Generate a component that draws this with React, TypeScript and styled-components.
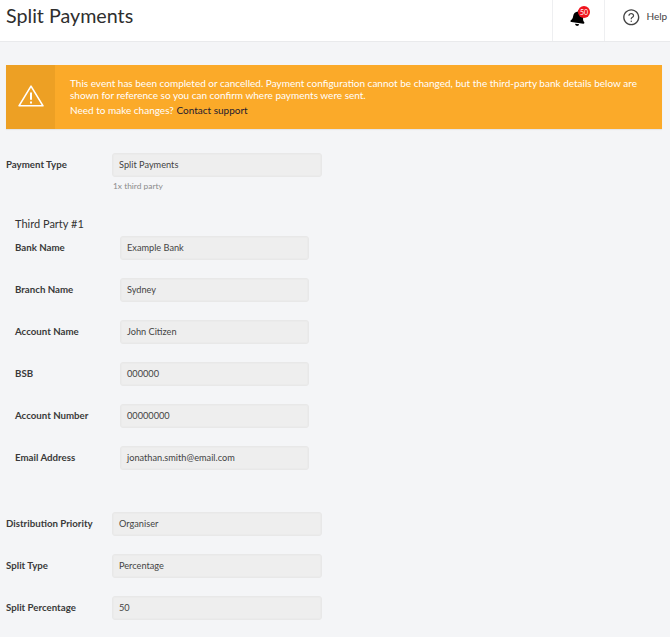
import React from 'react';
import styled, { createGlobalStyle } from 'styled-components';
import { FaBell } from 'react-icons/fa';
import { AiOutlineQuestionCircle } from 'react-icons/ai';

const GlobalStyle = createGlobalStyle`
  html, body {
    margin: 0;
    padding: 0;
    background: #f4f5f7;
    font-family: Lato, "Open Sans", sans-serif;
    color: #333;
  }
`;

const thirdParty = [
  { label: 'Bank Name', value: 'Example Bank' },
  { label: 'Branch Name', value: 'Sydney' },
  { label: 'Account Name', value: 'John Citizen' },
  { label: 'BSB', value: '000000' },
  { label: 'Account Number', value: '00000000' },
  { label: 'Email Address', value: 'jonathan.smith@email.com' },
];

const distribution = [
  { label: 'Distribution Priority', value: 'Organiser' },
  { label: 'Split Type', value: 'Percentage' },
  { label: 'Split Percentage', value: '50' },
];

const WarningIcon = () => (
  <svg width='26' height='22' viewBox='0 0 26 22' fill='none' stroke='#fff' strokeWidth='1.6' strokeLinejoin='round'>
    <path d='M13 1.2 L25 20.8 H1 Z' />
    <path d='M13 7.5 V14.8' strokeWidth='2' />
    <path d='M13 16.4 V18.6' strokeWidth='2' />
  </svg>
);

const App = () => {
  return (
    <Page>
      <GlobalStyle />
      <Header>
        <Title>Split Payments</Title>
        <BellCell>
          <BellWrap>
            <FaBell />
            <Badge>50</Badge>
          </BellWrap>
        </BellCell>
        <HelpCell>
          <AiOutlineQuestionCircle />
          <span>Help</span>
        </HelpCell>
      </Header>
      <Content>
        <Banner>
          <BannerIcon>
            <WarningIcon />
          </BannerIcon>
          <BannerText>
            <p>
              This event has been completed or cancelled. Payment configuration cannot be changed, but the third-party
              bank details below are shown for reference so you can confirm where payments were sent.
            </p>
            <p>
              Need to make changes? <a href='#'>Contact support</a>
            </p>
          </BannerText>
        </Banner>

        <Row>
          <Label>Payment Type</Label>
          <Field>Split Payments</Field>
        </Row>
        <Hint>1x third party</Hint>

        <ThirdParty>
          <SectionTitle>Third Party #1</SectionTitle>
          {thirdParty.map((item) => (
            <Row key={item.label}>
              <Label $nested>{item.label}</Label>
              <Field $nested>{item.value}</Field>
            </Row>
          ))}
        </ThirdParty>

        <Distribution>
          {distribution.map((item) => (
            <Row key={item.label}>
              <Label>{item.label}</Label>
              <Field>{item.value}</Field>
            </Row>
          ))}
        </Distribution>
      </Content>
    </Page>
  );
};
export default App;

const Page = styled.div`
  width: 670px;
  height: 637px;
  overflow: hidden;
`;

const Header = styled.header`
  display: flex;
  align-items: stretch;
  height: 41px;
  background: #fff;
  border-bottom: 1px solid #e9eaec;
`;

const Title = styled.h1`
  flex: 1;
  margin: 0;
  padding-left: 6px;
  font-size: 19.7px;
  font-weight: 400;
  line-height: 32px;
  color: #2e2e2e;
`;

const BellCell = styled.div`
  width: 52px;
  display: flex;
  align-items: flex-start;
  justify-content: center;
  padding-top: 10px;
  box-sizing: border-box;
  border-left: 1px solid #eeeff1;
`;

const BellWrap = styled.div`
  position: relative;
  width: 16px;
  height: 15px;
  margin-left: -1px;
  font-size: 16px;
  line-height: 15px;
  color: #000;

  svg {
    display: block;
    transform: rotate(8deg);
  }
`;

const Badge = styled.span`
  position: absolute;
  top: -4px;
  left: 8px;
  width: 12px;
  height: 12px;
  border-radius: 50%;
  background: #f0141e;
  color: #fff;
  font-size: 7px;
  line-height: 12px;
  text-align: center;
`;

const HelpCell = styled.div`
  width: 66px;
  display: flex;
  align-items: flex-start;
  gap: 6px;
  padding: 8px 0 0 17px;
  box-sizing: border-box;
  border-left: 1px solid #eeeff1;
  font-size: 10px;
  line-height: 16px;
  color: #444;

  svg {
    font-size: 18.5px;
    color: #444;
    flex: none;
  }
`;

const Content = styled.main`
  padding: 23px 8px 0 6px;
`;

const Banner = styled.section`
  display: flex;
  height: 64px;
  margin-bottom: 24px;
  background: #fbaa29;
  box-shadow: 0 1px 1px rgba(0, 0, 0, 0.06);
`;

const BannerIcon = styled.div`
  width: 49px;
  flex: none;
  display: flex;
  align-items: center;
  justify-content: center;
  padding-bottom: 3px;
  box-sizing: border-box;
  background: #eda024;
`;

const BannerText = styled.div`
  padding: 12px 14px 0 15px;
  font-size: 10px;
  line-height: 12px;
  color: #fff;

  p {
    margin: 0 0 3px;
  }

  a {
    color: #241b2f;
    text-decoration: none;
  }
`;

const Row = styled.div`
  display: flex;
  align-items: center;
  height: 24px;
  margin-bottom: 18px;
`;

const Label = styled.label<{ $nested?: boolean }>`
  width: ${(p) => (p.$nested ? '105px' : '106px')};
  flex: none;
  margin-bottom: 2px;
  font-size: 9.7px;
  font-weight: 700;
  color: #3a3a3a;
`;

const Field = styled.div<{ $nested?: boolean }>`
  width: ${(p) => (p.$nested ? '189px' : '210px')};
  height: 24px;
  box-sizing: border-box;
  padding-left: 6px;
  border: 1px solid #e8e8e8;
  border-radius: 3px;
  background: #eeeeee;
  box-shadow: inset 0 0 0 1px #ebebeb;
  font-size: 9.2px;
  line-height: 22px;
  color: #444;
`;

const Hint = styled.div`
  margin: -16px 0 0 107px;
  font-size: 8.4px;
  line-height: 14px;
  color: #8b8b8b;
`;

const ThirdParty = styled.section`
  padding: 24px 0 0 9px;
`;

const SectionTitle = styled.h2`
  margin: 0 0 5px;
  font-size: 11px;
  font-weight: 400;
  line-height: 14px;
  color: #333;
`;

const Distribution = styled.section`
  padding-top: 24px;
`;
